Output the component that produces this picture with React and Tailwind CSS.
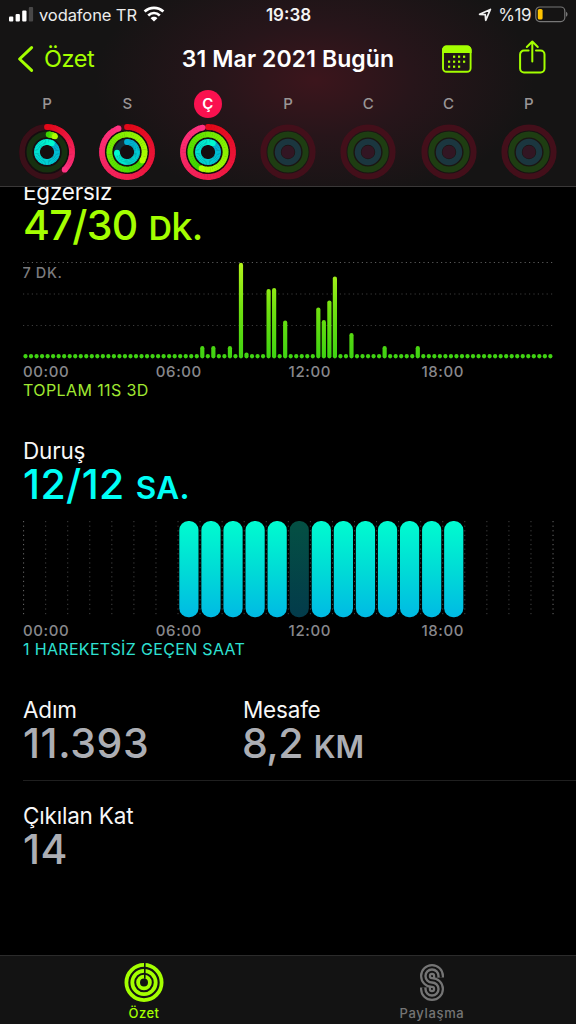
import React from "react";

const RING_TRACKS = [
  { r: 25, dim: "#3a0f18" },
  { r: 17.6, dim: "#16300f" },
  { r: 10, dim: "#12303a" },
];

const DAYS = [
  { id: "d1", letter: "P", values: [0.375, 0.06, 1] },
  { id: "d2", letter: "S", values: [0.945, 1.33, 0.74] },
  { id: "d3", letter: "Ç", values: [0.965, 1.56, 1], active: true },
  { id: "d4", letter: "P" },
  { id: "d5", letter: "C" },
  { id: "d6", letter: "C" },
  { id: "d7", letter: "P" },
];

const COLORS = [
  [[226, 8, 24], [255, 50, 130]],
  [[60, 214, 0], [176, 255, 0]],
  [[0, 176, 214], [0, 250, 208]],
];

function mix(a, b, t) {
  return `rgb(${a.map((v, i) => Math.round(v + (b[i] - v) * t)).join(",")})`;
}

function point(r, turn) {
  const a = turn * Math.PI * 2 - Math.PI / 2;
  return [30 + r * Math.cos(a), 30 + r * Math.sin(a)];
}

function GradientArc({ r, value, colors, rotate = 0 }) {
  const steps = 48;
  const shown = Math.min(value, 1);
  const parts = [];
  for (let i = 0; i < steps; i++) {
    const a = rotate + (shown * i) / steps;
    const b = rotate + (shown * (i + 1)) / steps + 0.003;
    const [x1, y1] = point(r, a);
    const [x2, y2] = point(r, b);
    parts.push(
      <path
        key={i}
        d={`M${x1} ${y1}A${r} ${r} 0 0 1 ${x2} ${y2}`}
        stroke={mix(colors[0], colors[1], i / steps)}
        strokeWidth="5.8"
        fill="none"
      />
    );
  }
  const [sx, sy] = point(r, rotate);
  const [ex, ey] = point(r, rotate + shown);
  return (
    <g>
      {shown < 1 && <circle cx={sx} cy={sy} r="2.9" fill={mix(colors[0], colors[1], 0)} />}
      {parts}
      <circle cx={ex} cy={ey} r="2.9" fill={mix(colors[0], colors[1], 1)} />
    </g>
  );
}

function DayRings({ values }) {
  return (
    <svg className="h-[60px] w-[60px]" viewBox="0 0 60 60">
      {values ? (
        <>
          <circle cx="30" cy="30" r="28" fill="#150d10" />
          {RING_TRACKS.map((t, i) => (
            <circle key={i} cx="30" cy="30" r={t.r} fill="none" stroke={t.dim} strokeWidth="5.8" />
          ))}
          {values.map((v, i) => (
            <GradientArc
              key={i}
              r={RING_TRACKS[i].r}
              value={v}
              colors={COLORS[i]}
              rotate={v > 1 ? v - 1 : i === 2 && v === 1 ? 0.08 : v < 0.1 ? 0.015 : 0}
            />
          ))}
        </>
      ) : (
        <>
          <circle cx="30" cy="30" r="24.6" fill="none" stroke="#430f1a" strokeWidth="6" />
          <circle cx="30" cy="30" r="21" fill="#1b1513" />
          <circle cx="30" cy="30" r="17.6" fill="none" stroke="#1e3d12" strokeWidth="6" />
          <circle cx="30" cy="30" r="10.2" fill="none" stroke="#1b363f" strokeWidth="6" />
          <circle cx="30" cy="30" r="6.6" fill="#321623" />
        </>
      )}
    </svg>
  );
}

function StatusBar() {
  return (
    <div className="flex h-[30px] items-center justify-between pl-[9px] pr-[8px]">
      <div className="flex w-[220px] items-center">
        <svg className="h-[16px] w-[25px]" viewBox="0 0 25 16">
          <rect x="0" y="9.5" width="4.3" height="5" rx="1" fill="#fff" />
          <rect x="6.6" y="7" width="4.3" height="7.5" rx="1" fill="#fff" />
          <rect x="13.2" y="3.5" width="4.3" height="11" rx="1" fill="#fff" />
          <rect x="19.8" y="0" width="4.3" height="14.5" rx="1" fill="#484747" />
        </svg>
        <span className="ml-[5px] whitespace-nowrap text-[16.5px] leading-[22px] tracking-[-0.1px] text-[#ececec]">
          vodafone TR
        </span>
        <svg className="-mt-[2px] ml-[6px] h-[16px] w-[22px]" viewBox="0 0 22 16">
          <path d="M1.6 5.6C7 .6 15 .6 20.4 5.6" fill="none" stroke="#fff" strokeWidth="2.7" />
          <path d="M5.2 9.4C8.6 6.2 13.4 6.2 16.8 9.4" fill="none" stroke="#fff" strokeWidth="2.7" />
          <path d="M11 15.6L7.6 12.2C9.5 10.4 12.5 10.4 14.4 12.2Z" fill="#fff" />
        </svg>
      </div>
      <span className="whitespace-nowrap text-[17px] font-semibold leading-[22px] tracking-[0px] text-[#f4f4f4]">
        19:38
      </span>
      <div className="flex w-[220px] items-center justify-end">
        <svg className="mr-[6px] h-[14px] w-[14px]" viewBox="0 0 14 14">
          <path d="M12.4 1.4L1.6 6.3L7.3 6.7L7.7 12.3Z" fill="none" stroke="#f0f0f0" strokeWidth="1.7" strokeLinejoin="round" />
        </svg>
        <span className="whitespace-nowrap text-[17px] leading-[22px] tracking-[-0.5px] text-[#ececec]">%19</span>
        <svg className="-mt-[2px] ml-[4px] h-[17px] w-[33px]" viewBox="0 0 33 17">
          <rect x="0.8" y="1" width="29" height="14.6" rx="4" fill="none" stroke="#777" strokeWidth="1.2" />
          <rect x="2.8" y="3" width="4.8" height="10.6" rx="1.6" fill="#ffc400" />
          <path d="M31 5.8C33 6.6 33 10 31 10.8Z" fill="#777" />
        </svg>
      </div>
    </div>
  );
}

function NavBar() {
  const dots = [
    [11, 0], [16, 0], [21, 0],
    [6, 1], [11, 1], [16, 1], [21, 1],
    [6, 2], [11, 2], [16, 2],
  ];
  return (
    <div className="grid h-[58px] grid-cols-[180px_216px_180px] items-center">
      <div className="flex items-center pl-[17px]">
        <svg className="h-[28px] w-[18px]" viewBox="0 0 18 28">
          <path d="M14.6 2.6L2.6 14L14.6 25.4" fill="none" stroke="#a4ff00" strokeWidth="3" strokeLinecap="round" strokeLinejoin="round" />
        </svg>
        <span className="ml-[9px] text-[23.5px] leading-[30px] tracking-[-0.4px] text-[#a4ff00]">Özet</span>
      </div>
      <h1 className="whitespace-nowrap text-center text-[23px] font-semibold leading-[30px] tracking-[0.1px] text-white">
        31 Mar 2021 Bugün
      </h1>
      <div className="flex items-center pl-[45px]">
        <svg className="-mt-[1px] h-[28px] w-[31px]" viewBox="0 0 31 28">
          <rect x="2" y="1.4" width="27.6" height="25.4" rx="3.6" fill="none" stroke="#a4ff00" strokeWidth="1.9" />
          <path d="M1 8V5A4.4 4.4 0 0 1 5.4 .6H26.2A4.4 4.4 0 0 1 30.6 5V8Z" fill="#a4ff00" />
          {dots.map(([x, row], i) => (
            <rect key={i} x={x + 1} y={10.6 + row * 5} width="2.2" height="2.2" fill="#a4ff00" />
          ))}
        </svg>
        <svg className="-mt-[4px] ml-[46px] h-[36px] w-[30px]" viewBox="0 0 30 36">
          <path d="M10.6 11.6H6A3.9 3.9 0 0 0 2.1 15.5V29.6A3.9 3.9 0 0 0 6 33.5H22.6A3.9 3.9 0 0 0 26.5 29.6V15.5A3.9 3.9 0 0 0 22.6 11.6H18" fill="none" stroke="#a4ff00" strokeWidth="2" strokeLinecap="round" />
          <path d="M14.3 22.6V3M8.8 8L14.3 2.5L19.8 8" fill="none" stroke="#a4ff00" strokeWidth="2" strokeLinecap="round" strokeLinejoin="round" />
        </svg>
      </div>
    </div>
  );
}

function WeekStrip() {
  return (
    <div className="grid grid-cols-7 pl-[7px] pr-[7px]">
      {DAYS.map((d) => (
        <div key={d.id} className="flex flex-col items-center">
          <span
            className={
              d.active
                ? "flex h-[28px] w-[28px] -mt-[1px] mb-[-1px] translate-y-[3px] items-center justify-center rounded-full bg-[#fa114f] text-[15px] font-semibold text-white"
                : "flex h-[26px] translate-y-[3px] items-center text-[15px] font-medium text-[#9a9596]"
            }
          >
            {d.letter}
          </span>
          <div className="mt-[8px]">
            <DayRings values={d.values} />
          </div>
        </div>
      ))}
    </div>
  );
}

function AxisLabels() {
  return (
    <div className="grid grid-cols-[132.8px_132.8px_132.8px_1fr] pt-[2px] text-[15px] font-medium leading-[18px] tracking-[0.6px] text-[#88888c]">
      <span>00:00</span>
      <span>06:00</span>
      <span>12:00</span>
      <span>18:00</span>
    </div>
  );
}

const EXERCISE = {
  32: 12.3, 34: 12.3, 37: 12.3, 39: 95.6, 40: 6, 44: 69.5, 45: 70.5, 47: 38, 53: 51,
  54: 38.3, 55: 58, 56: 82, 59: 25.3, 65: 12.3, 71: 12.3,
};

function ExerciseChart() {
  return (
    <svg className="mt-[15px] h-[101px] w-[531px]" viewBox="0 0 531 101">
      <defs>
        <linearGradient id="move" gradientUnits="userSpaceOnUse" x1="0" y1="98" x2="0" y2="2">
          <stop offset="0" stopColor="#3ed312" />
          <stop offset="0.5" stopColor="#6fe010" />
          <stop offset="1" stopColor="#b4f41c" />
        </linearGradient>
      </defs>
      <path d="M0 2.5H531" stroke="#5c5c5c" strokeWidth="1" strokeDasharray="1.2 3.2" />
      <path d="M0 34H531M0 65.5H531" stroke="#3c3c3c" strokeWidth="1" strokeDasharray="1.2 3.2" />
      <text x="-0.5" y="17.8" fill="#7b7b7f" fontSize="14.5" fontWeight="500" letterSpacing="0.6">
        7 DK.
      </text>
      {Array.from({ length: 96 }, (_, i) => {
        const h = EXERCISE[i] || 4.4;
        return <rect key={i} x={0.4 + i * 5.525} y={98.4 - h} width="4.2" height={h} rx="2.1" fill="url(#move)" />;
      })}
    </svg>
  );
}

function StandChart() {
  return (
    <svg className="mt-[16px] h-[100px] w-[531px]" viewBox="0 0 531 100">
      <defs>
        <linearGradient id="stand" x1="0" y1="0" x2="0" y2="1">
          <stop offset="0" stopColor="#00fccf" />
          <stop offset="0.5" stopColor="#00dcd6" />
          <stop offset="1" stopColor="#00bae4" />
        </linearGradient>
        <linearGradient id="idle" x1="0" y1="0" x2="0" y2="1">
          <stop offset="0" stopColor="#045043" />
          <stop offset="1" stopColor="#033b4b" />
        </linearGradient>
      </defs>
      {Array.from({ length: 25 }, (_, i) => (
        <path
          key={i}
          d={`M${0.6 + i * 22.06} 1V95`}
          stroke={i === 0 || i === 24 ? "#6a6a6a" : "#424242"}
          strokeWidth="1"
          strokeDasharray="1.2 3.4"
        />
      ))}
      {Array.from({ length: 13 }, (_, i) => (
        <rect
          key={i}
          x={156.3 + i * 22.07}
          y="1"
          width="19.2"
          height="96.2"
          rx="9"
          fill={i === 5 ? "url(#idle)" : "url(#stand)"}
        />
      ))}
    </svg>
  );
}

function Label({ children }) {
  return (
    <div className="h-[28px] whitespace-nowrap pt-[2px] text-[22.5px] leading-[26px] tracking-[-0.2px] text-[#f7f7f7]">
      {children}
    </div>
  );
}

function Stat({ label, children }) {
  return (
    <div>
      <Label>{label}</Label>
      <div className="h-[40px] whitespace-nowrap text-[41px] font-medium leading-[40px] text-[#acaeb4]">{children}</div>
    </div>
  );
}

function TabBar() {
  return (
    <nav className="grid h-[69px] shrink-0 grid-cols-2 border-t border-[#2b2b2b] bg-[#131313]">
      <div className="flex flex-col items-center pt-[6px] text-[#a4ff00]">
        <svg className="h-[42px] w-[42px]" viewBox="0 0 42 42">
          <g fill="none" stroke="#a4ff00" strokeWidth="3.8">
            <circle cx="21" cy="20.5" r="17.6" />
            <circle cx="21" cy="20.5" r="11.7" />
            <circle cx="21" cy="20.5" r="5.9" />
          </g>
          <path d="M21.8 0V16.8" stroke="#131313" strokeWidth="1.6" />
        </svg>
        <span className="text-[13px] font-medium leading-[18px] tracking-[0.5px]">Özet</span>
      </div>
      <div className="flex flex-col items-center pt-[6px] text-[#757575]">
        <svg className="h-[42px] w-[30px]" viewBox="0 0 30 42" fill="none">
          {[
            ["#757575", 11],
            ["#131313", 6.6],
            ["#757575", 2.4],
          ].map(([c, w]) => (
            <path
              key={w}
              d="M21.5 15.5V14A6.5 6.5 0 1 0 15 20.5A6.5 6.5 0 1 1 8.5 27V25.5"
              stroke={c}
              strokeWidth={w}
            />
          ))}
        </svg>
        <span className="text-[13px] font-medium leading-[18px] tracking-[0.65px]">Paylaşma</span>
      </div>
    </nav>
  );
}

export default function App() {
  return (
    <div className="flex h-[1024px] w-[576px] flex-col overflow-hidden bg-black font-[Inter,'Liberation_Sans',sans-serif]">
      <header className="h-[187px] shrink-0 border-b border-[#3a3838] bg-[#151414] bg-[radial-gradient(ellipse_220px_125px_at_315px_80px,#3c151c_0%,#27151a_45%,#151414_100%)]">
        <StatusBar />
        <NavBar />
        <WeekStrip />
      </header>

      <main className="flex-1 overflow-hidden pl-[23px]">
        <div className="-mt-[10px]">
          <Label>Egzersiz</Label>
          <div className="h-[40px] whitespace-nowrap text-[41px] font-medium leading-[40px] tracking-[-0.6px] text-[#a4ff00]">
            47/30<span className="ml-[11px] text-[32px] font-semibold">D</span>
            <span className="text-[38px]">k.</span>
          </div>
          <ExerciseChart />
          <AxisLabels />
          <div className="h-[19px] text-[16px] leading-[19px] tracking-[0.4px] text-[#a0e832]">TOPLAM 11S 3D</div>
        </div>

        <div className="mt-[36px]">
          <Label>Duruş</Label>
          <div className="h-[40px] whitespace-nowrap text-[41px] font-medium leading-[40px] tracking-[0.4px] text-[#00fff6]">
            12/12<span className="ml-[11px] text-[31.5px] font-semibold">SA.</span>
          </div>
          <StandChart />
          <AxisLabels />
          <div className="h-[19px] text-[16px] leading-[19px] tracking-[0.33px] text-[#2fe0d2]">1 HAREKETSİZ GEÇEN SAAT</div>
        </div>

        <div className="mt-[36px] grid grid-cols-[220px_1fr] border-b border-[#1f1f1f] pb-[17px]">
          <Stat label="Adım">
            <span className="tracking-[0.6px]">11.393</span>
          </Stat>
          <Stat label="Mesafe">
            <span className="-ml-[1px] tracking-[-0.6px]">8,2</span>
            <span className="ml-[11px] text-[31px] font-semibold tracking-[0px]">KM</span>
          </Stat>
        </div>
        <div className="mt-[20px]">
          <Stat label="Çıkılan Kat">
            <span className="tracking-[0.6px]">14</span>
          </Stat>
        </div>
      </main>

      <TabBar />
    </div>
  );
}
